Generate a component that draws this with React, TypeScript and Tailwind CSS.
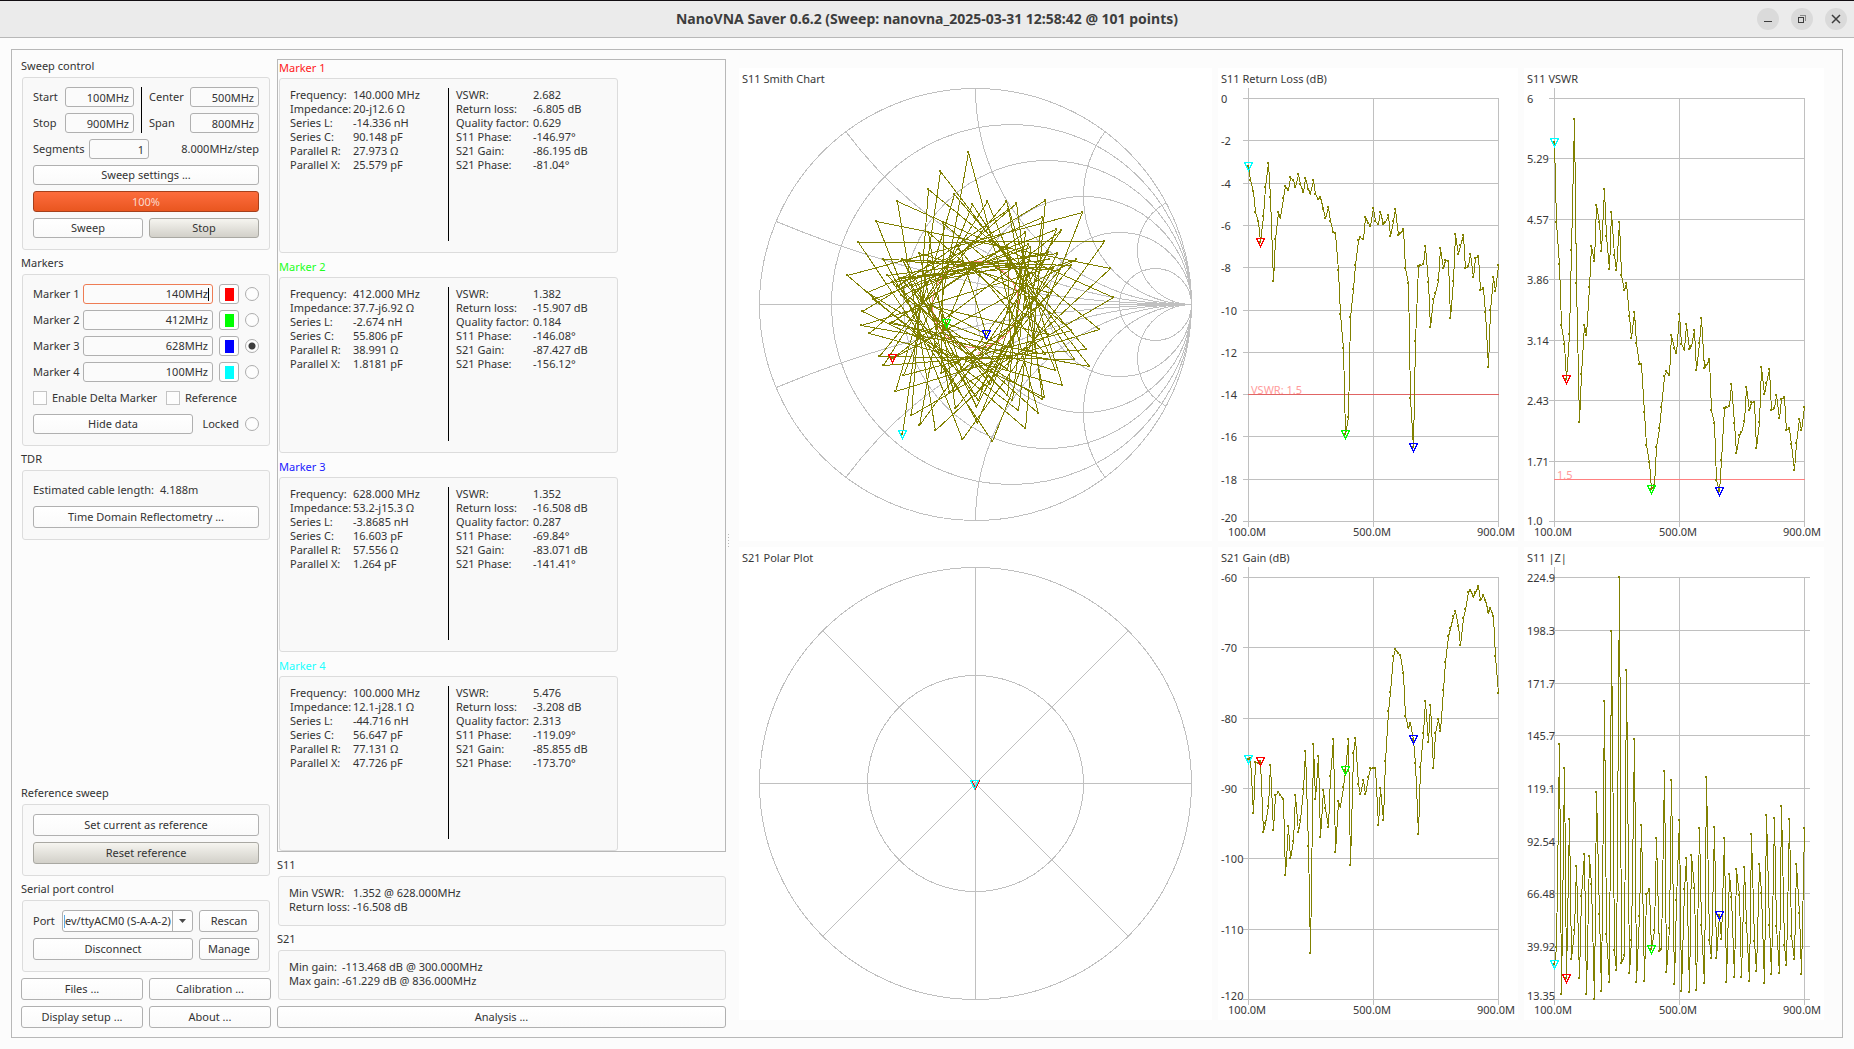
import { useId } from 'react'
import type { ReactNode } from 'react'

const returnLoss = [
  3.208, 3.9, 4.4, 5.4, 5.83, 6.805, 5.6, 4.21, 3.05, 4.67, 8.66, 6.65, 5.41, 5.62, 4.73, 4.16, 4.36, 3.72, 3.89, 4.22,
  3.58, 4.05, 4.46, 3.79, 4.28, 4.48, 3.9, 4.54, 4.77, 4.66, 5.23, 5.69, 5.15, 5.8, 6.34, 6.36, 8.14, 10.2, 11.8, 15.907,
  15.1, 10.35, 9.03, 7.9, 6.72, 6.57, 6.69, 5.63, 5.92, 6.06, 5.18, 5.83, 5.95, 5.38, 5.95, 5.88, 5.51, 6.53, 5.8, 5.26,
  6.46, 6.37, 6.21, 8.05, 8.73, 14.2, 16.508, 11.5, 7.95, 7.9, 7.85, 6.98, 8.7, 10.83, 9.48, 9.23, 8.61, 7.08, 8.02, 7.68,
  7.7, 10.4, 8.66, 6.43, 7.37, 6.94, 6.49, 8.03, 7.95, 7.39, 8.45, 7.57, 7.46, 9.1, 9.0, 10.1, 12.74, 10.0, 8.48, 9.12,
  7.9,
]

const impedance = [
  30.7, 39.5, 141.3, 15.7, 129.2, 24, 103.8, 33.6, 48, 79.9, 23.7, 64.8, 86.2, 15.7, 85.2, 71, 13.5, 117.3, 56, 17.2,
  162.7, 46, 22, 198, 38, 27.7, 225, 31.2, 35.6, 178.4, 26.2, 43, 143.8, 22, 54.8, 100.7, 22.5, 66, 68.5, 38.3,
  48.1, 94.2, 37.6, 38.6, 127.8, 27, 49, 123.3, 20.7, 63, 103.2, 17.5, 68.5, 84.2, 16.7, 85.7, 69, 18, 99.2, 50.6,
  21.2, 124.8, 43, 33.7, 99.7, 33.7, 55.35, 43.4, 94.2, 22, 76, 64.3, 24.5, 78.7, 65.6, 24.5, 79.7, 51.3, 22.5, 96.2,
  42.3, 27.6, 81.2, 66.5, 21.5, 105.8, 50.3, 25.7, 104.3, 50, 26.5, 110.3, 40.6, 30.2, 103.8, 44.8, 33.2, 81.2, 56.5, 25.7,
  98.9,
]

const gain = [
  -85.855, -85.8, -93.5, -86.3, -86.5, -86.195, -96.2, -95, -92.5, -86.8, -96, -91, -90.6, -91, -91.5, -102.4, -95.4, -99.9, -97.6, -91,
  -96.3, -94.6, -90.2, -84.8, -98.3, -113.468, -83.7, -91.6, -85.5, -97, -90.3, -92.8, -95.5, -88.3, -83.1, -99.1, -91.8, -92.6, -89.9, -87.427,
  -83.1, -101, -85, -82.9, -89.4, -90.8, -88.8, -90.9, -88.4, -87.2, -87.2, -87.1, -95.2, -90, -94.6, -86.2, -79.1, -76.3, -71.3, -70.3,
  -70.8, -71.1, -73.6, -79.7, -81.3, -80.7, -83.071, -86.4, -96.6, -87, -82.2, -77.7, -83.5, -78.2, -87.1, -82.2, -80.2, -81.9, -76.1, -72.1,
  -68.4, -67.3, -65.6, -64.9, -66.9, -69.7, -65.9, -64.5, -62.2, -61.9, -62.7, -62.2, -61.229, -63.3, -62.6, -63.2, -65, -64.4, -65.5, -71.2,
  -76.5,
]

const magnitude = returnLoss.map((rl) => Math.pow(10, -rl / 20))
const vswr = magnitude.map((m) => (1 + m) / (1 - m))

// phases measured at the marker positions, in degrees
const knownPhase: Record<number, number> = { 0: -119.09, 5: -146.97, 39: -146.08, 66: -69.84 }

const wrap = (deg: number) => ((((deg + 180) % 360) + 360) % 360) - 180

// |Z| and |S11| give the phase up to its sign, the sign follows from the cable delay per step
const phase: number[] = []
magnitude.forEach((m, i) => {
  if (knownPhase[i] !== undefined) {
    phase.push(knownPhase[i])
    return
  }
  const k = (impedance[i] / 50) ** 2
  const cos = ((1 + m * m) * (k - 1)) / (2 * m * (k + 1))
  const angle = (Math.acos(Math.max(-1, Math.min(1, cos))) * 180) / Math.PI
  const expected = phase[i - 1] - (i < 10 ? 150 : 126)
  phase.push(Math.abs(wrap(angle - expected)) < Math.abs(wrap(-angle - expected)) ? angle : -angle)
})

interface Marker {
  name: string
  color: string
  textClass: string
  swatchClass: string
  index: number
  value: string
  left: [string, string][]
  right: [string, string][]
}

const buildMarker = (
  name: string,
  color: string,
  textClass: string,
  swatchClass: string,
  index: number,
  value: string,
  l: string[],
  r: string[],
): Marker => ({
  name,
  color,
  textClass,
  swatchClass,
  index,
  value,
  left: ['Frequency:', 'Impedance:', 'Series L:', 'Series C:', 'Parallel R:', 'Parallel X:'].map((k, i) => [k, l[i]]),
  right: ['VSWR:', 'Return loss:', 'Quality factor:', 'S11 Phase:', 'S21 Gain:', 'S21 Phase:'].map((k, i) => [k, r[i]]),
})

const markers: Marker[] = [
  buildMarker('Marker 1', '#ff0000', 'text-[#ff2020]', 'bg-[#ff0000]', 5, '140MHz',
    ['140.000 MHz', '20-j12.6 Ω', '-14.336 nH', '90.148 pF', '27.973 Ω', '25.579 pF'],
    ['2.682', '-6.805 dB', '0.629', '-146.97°', '-86.195 dB', '-81.04°']),
  buildMarker('Marker 2', '#00ff00', 'text-[#20ff20]', 'bg-[#00ff00]', 39, '412MHz',
    ['412.000 MHz', '37.7-j6.92 Ω', '-2.674 nH', '55.806 pF', '38.991 Ω', '1.8181 pF'],
    ['1.382', '-15.907 dB', '0.184', '-146.08°', '-87.427 dB', '-156.12°']),
  buildMarker('Marker 3', '#0000ff', 'text-[#2020ff]', 'bg-[#0000ff]', 66, '628MHz',
    ['628.000 MHz', '53.2-j15.3 Ω', '-3.8685 nH', '16.603 pF', '57.556 Ω', '1.264 pF'],
    ['1.352', '-16.508 dB', '0.287', '-69.84°', '-83.071 dB', '-141.41°']),
  buildMarker('Marker 4', '#00ffff', 'text-[#20ffff]', 'bg-[#00ffff]', 0, '100MHz',
    ['100.000 MHz', '12.1-j28.1 Ω', '-44.716 nH', '56.647 pF', '77.131 Ω', '47.726 pF'],
    ['5.476', '-3.208 dB', '2.313', '-119.09°', '-85.855 dB', '-173.70°']),
]

const Panel = ({ className = '', children }: { className?: string; children: ReactNode }) => (
  <div className={`rounded-[3px] border border-[#dcdcdc] bg-[#f9f9f9] ${className}`}>{children}</div>
)

const Title = ({ children }: { children: ReactNode }) => <h2 className="flex h-6 items-center pt-0.5">{children}</h2>

const Button = ({ children, className = 'h-[22px]' }: { children: ReactNode; className?: string }) => (
  <button
    type="button"
    className={`rounded-[3px] border border-[#b0b0b0] bg-linear-to-b from-white to-[#fafafa] text-center ${className}`}
  >
    {children}
  </button>
)

const DullButton = ({ children, className = 'h-[22px]' }: { children: ReactNode; className?: string }) => (
  <button
    type="button"
    className={`rounded-[3px] border border-[#a9a8a2] bg-linear-to-b from-[#f6f5f0] to-[#d2d0c9] text-center ${className}`}
  >
    {children}
  </button>
)

const Field = ({ label, value, labelClass, inputClass }: { label: string; value: string; labelClass: string; inputClass: string }) => {
  const id = useId()
  return (
    <div className="flex h-5 items-center">
      <label htmlFor={id} className={labelClass}>
        {label}
      </label>
      <input
        id={id}
        defaultValue={value}
        className={`h-5 rounded-[3px] border border-[#b0b0b0] bg-[#fbfbfb] px-1 text-right ${inputClass}`}
      />
    </div>
  )
}

const Radio = ({ label, checked = false }: { label: string; checked?: boolean }) => (
  <input
    type="radio"
    name="active-marker"
    aria-label={label}
    defaultChecked={checked}
    className="size-[14px] appearance-none rounded-full border border-[#adadad] bg-[#fdfdfd] checked:bg-[radial-gradient(circle,#3c3c3c_3px,#fdfdfd_4px)]"
  />
)

const Check = ({ label, className = '' }: { label: string; className?: string }) => (
  <label className={`flex items-center gap-[5px] whitespace-nowrap ${className}`}>
    <input type="checkbox" className="size-[14px] appearance-none border border-[#c4c4c4] bg-[#fdfdfd]" />
    {label}
  </label>
)

const SweepControl = () => (
  <section>
    <Title>Sweep control</Title>
    <Panel className="mx-px flex flex-col gap-1.5 px-2.5 pt-[9px] pb-[11px]">
      <div className="flex justify-between">
        <div className="flex flex-col gap-1.5">
          <Field label="Start" value="100MHz" labelClass="w-8" inputClass="w-[69px]" />
          <Field label="Stop" value="900MHz" labelClass="w-8" inputClass="w-[69px]" />
        </div>
        <div className="w-px bg-black" />
        <div className="flex flex-col gap-1.5">
          <Field label="Center" value="500MHz" labelClass="w-[41px]" inputClass="w-[69px]" />
          <Field label="Span" value="800MHz" labelClass="w-[41px]" inputClass="w-[69px]" />
        </div>
      </div>
      <div className="flex items-center justify-between">
        <Field label="Segments" value="1" labelClass="w-14" inputClass="w-[60px]" />
        <span>8.000MHz/step</span>
      </div>
      <Button className="h-5">Sweep settings ...</Button>
      <div
        role="progressbar"
        aria-valuenow={100}
        className="flex h-[21px] items-center justify-center rounded-[3px] border border-[#a5401c] bg-linear-to-b from-[#fd6c3c] to-[#e9561f] text-[#fbd9cc]"
      >
        100%
      </div>
      <div className="grid grid-cols-2 gap-1.5">
        <Button className="h-5">Sweep</Button>
        <DullButton className="h-5">Stop</DullButton>
      </div>
    </Panel>
  </section>
)

const MarkerRow = ({ marker, focused, active }: { marker: Marker; focused: boolean; active: boolean }) => {
  const id = useId()
  return (
    <div className="flex h-5 items-center gap-1.5">
      <label htmlFor={id} className="w-11 whitespace-nowrap">
        {marker.name}
      </label>
      <div
        className={`flex h-5 flex-1 items-center rounded-[3px] border bg-[#fbfbfb] ${focused ? 'border-[#ee7c54] pr-[3px]' : 'border-[#b0b0b0] pr-1'}`}
      >
        <input id={id} defaultValue={marker.value} className="w-full min-w-0 flex-1 bg-transparent text-right outline-none" />
        {focused && <span className="h-[13px] w-px bg-black" />}
      </div>
      <button
        type="button"
        aria-label={`${marker.name} color`}
        className="flex size-5 items-center justify-center rounded-[3px] border border-[#b0b0b0] bg-white"
      >
        <span className={`h-[13px] w-[9px] ${marker.swatchClass}`} />
      </button>
      <Radio label={marker.name} checked={active} />
    </div>
  )
}

const MarkersPanel = () => (
  <section>
    <Title>Markers</Title>
    <Panel className="mx-px flex flex-col gap-1.5 px-2.5 pt-[9px] pb-[11px]">
      {markers.map((m, i) => (
        <MarkerRow key={m.name} marker={m} focused={i === 0} active={i === 2} />
      ))}
      <div className="flex h-5 items-center">
        <Check label="Enable Delta Marker" className="w-[133px]" />
        <Check label="Reference" />
      </div>
      <div className="flex items-center justify-between">
        <Button className="h-5 w-40">Hide data</Button>
        <label className="flex items-center gap-1.5">
          Locked <Radio label="Locked" />
        </label>
      </div>
    </Panel>
  </section>
)

const Sidebar = () => (
  <aside className="flex w-[250px] shrink-0 flex-col">
    <SweepControl />
    <MarkersPanel />
    <section>
      <Title>TDR</Title>
      <Panel className="mx-px flex flex-col gap-1.5 px-2.5 pt-[9px] pb-[11px]">
        <p className="flex h-5 items-center gap-1.5">
          <span>Estimated cable length:</span>
          <span>4.188m</span>
        </p>
        <Button>Time Domain Reflectometry ...</Button>
      </Panel>
    </section>
    <section className="mt-auto">
      <Title>Reference sweep</Title>
      <Panel className="mx-px flex flex-col gap-1.5 px-2.5 pt-[9px] pb-[11px]">
        <Button>Set current as reference</Button>
        <DullButton>Reset reference</DullButton>
      </Panel>
    </section>
    <section>
      <Title>Serial port control</Title>
      <Panel className="mx-px flex flex-col gap-1.5 px-2.5 pt-[9px] pb-[11px]">
        <div className="flex items-center gap-1.5">
          <label htmlFor="port" className="w-[23px]">
            Port
          </label>
          <div className="flex h-[22px] min-w-0 flex-1 items-center rounded-[3px] border border-[#b0b0b0] bg-[#fdfdfd] pl-px">
            <span className="h-[13px] w-px bg-[#5aa9e6]" />
            <select id="port" className="h-full min-w-0 flex-1 appearance-none overflow-hidden whitespace-nowrap">
              <option>ev/ttyACM0 (S-A-A-2)</option>
            </select>
            <span className="flex h-full w-5 items-center justify-center border-l border-[#b0b0b0]">
              <svg width="7" height="4" viewBox="0 0 7 4" fill="#4a4a4a">
                <path d="M0 0h7L3.5 4z" />
              </svg>
            </span>
          </div>
          <Button className="h-[22px] w-[60px]">Rescan</Button>
        </div>
        <div className="flex gap-1.5">
          <Button className="h-[22px] flex-1">Disconnect</Button>
          <Button className="h-[22px] w-[60px]">Manage</Button>
        </div>
      </Panel>
    </section>
    <div className="mt-1.5 grid grid-cols-2 gap-1.5">
      <Button>Files ...</Button>
      <Button>Calibration ...</Button>
      <Button>Display setup ...</Button>
      <Button>About ...</Button>
    </div>
  </aside>
)

const Pairs = ({ rows, labelClass }: { rows: [string, string][]; labelClass: string }) => (
  <dl>
    {rows.map(([k, v]) => (
      <div key={k} className="flex h-3.5 items-center whitespace-nowrap">
        <dt className={labelClass}>{k}</dt>
        <dd>{v}</dd>
      </div>
    ))}
  </dl>
)

const DataColumn = () => (
  <div className="flex w-[449px] shrink-0 flex-col pt-1.5">
    <div className="flex flex-1 flex-col gap-1.5 border border-[#b8b8b8] pl-px">
      {markers.map((m) => (
        <section key={m.name} className="flex flex-1 flex-col">
          <h3 className={`flex h-[18px] items-center pb-0.5 ${m.textClass}`}>{m.name}</h3>
          <Panel className="flex w-[339px] flex-1 px-2.5 pt-[9px] pb-[11px]">
            <div className="w-[158px]">
              <Pairs rows={m.left} labelClass="w-[63px]" />
            </div>
            <div className="mr-[7px] w-px bg-black" />
            <Pairs rows={m.right} labelClass="w-[77px]" />
          </Panel>
        </section>
      ))}
    </div>
    <Title>S11</Title>
    <Panel className="ml-px h-[50px] px-2.5 pt-[9px]">
      <Pairs rows={[['Min VSWR:', '1.352 @ 628.000MHz'], ['Return loss:', '-16.508 dB']]} labelClass="w-16" />
    </Panel>
    <Title>S21</Title>
    <Panel className="ml-px h-[50px] px-2.5 pt-[9px]">
      <Pairs rows={[['Min gain:', '-113.468 dB @ 300.000MHz'], ['Max gain:', '-61.229 dB @ 836.000MHz']]} labelClass="w-[53px]" />
    </Panel>
    <Button className="mt-1.5 h-[22px]">Analysis ...</Button>
  </div>
)

const Trace = ({ points }: { points: [number, number][] }) => (
  <g shapeRendering="crispEdges">
    <polyline points={points.map((p) => p.join(',')).join(' ')} fill="none" stroke="#808000" />
    {points.map(([x, y], i) => (
      <rect key={i} x={x - 1.5} y={y - 1.5} width="2" height="2" fill="#808000" />
    ))}
  </g>
)

const MarkerShapes = ({ place }: { place: (index: number) => [number, number] }) => (
  <g shapeRendering="crispEdges" fill="none">
    {markers.map((m) => {
      const [x, y] = place(m.index)
      return <path key={m.name} d={`M${x - 4} ${y - 4}h8l-4 8z`} stroke={m.color} />
    })}
  </g>
)

interface CartesianProps {
  title: string
  data: number[]
  min: number
  max: number
  labels: string[]
  bottom: number
  lastLabelShift?: number
  limit?: { value: number; text: string; color: string }
  wide?: boolean
}

const CartesianChart = ({ title, data, min, max, labels, bottom, lastLabelShift = 0, limit, wide = false }: CartesianProps) => {
  const top = 30.5
  const toY = (value: number) => Math.floor(top + ((max - value) / (max - min)) * (bottom - top)) + 0.5
  const place = (i: number): [number, number] => [Math.floor(30 + i * 2.5) + 0.5, toY(data[i])]
  const limitY = limit ? toY(limit.value) : 0
  return (
    <svg viewBox="0 0 300 473" className="size-full bg-white" fill="#383838" fontSize="11" role="img" aria-label={title}>
      <g stroke="#c0c0c0" shapeRendering="crispEdges">
        {labels.map((l) => (
          <line key={l} x1="25" x2={wide ? 286 : 281} y1={toY(Number(l))} y2={toY(Number(l))} />
        ))}
        <line x1="30.5" x2="30.5" y1="20" y2={bottom + 5} />
        <line x1="155.5" x2="155.5" y1="30" y2={bottom + 5} />
        <line x1="280.5" x2="280.5" y1="30" y2={bottom + 5} />
        {limit && <line x1="30" x2="281" y1={limitY} y2={limitY} stroke={limit.color} />}
      </g>
      <text x="3" y="15">
        {title}
      </text>
      {labels.map((l, i) => (
        <text key={l} x="3" y={toY(Number(l)) + (i === labels.length - 1 ? lastLabelShift : 4)}>
          {l}
        </text>
      ))}
      <text x="10" y={bottom + 14}>100.0M</text>
      <text x="135" y={bottom + 14}>500.0M</text>
      <text x="259" y={bottom + 14}>900.0M</text>
      {limit && (
        <text x="33" y={limitY - 1} fill="#ff9c9c">
          {limit.text}
        </text>
      )}
      <Trace points={data.map((_, i) => place(i))} />
      <MarkerShapes place={place} />
    </svg>
  )
}

const CENTER = 236.5
const RADIUS = 216

const gammaPoint = (i: number): [number, number] => {
  const rad = (phase[i] * Math.PI) / 180
  return [
    Math.floor(CENTER + RADIUS * magnitude[i] * Math.cos(rad)) + 0.5,
    Math.floor(CENTER - RADIUS * magnitude[i] * Math.sin(rad)) + 0.5,
  ]
}

const SmithChart = () => (
  <svg viewBox="0 0 473 473" className="size-full bg-white" fontSize="11" role="img" aria-label="S11 Smith Chart">
    <text x="3" y="15" fill="#383838">
      S11 Smith Chart
    </text>
    <g fill="none" stroke="#c0c0c0" shapeRendering="crispEdges">
      <line x1={CENTER - RADIUS} x2={CENTER + RADIUS} y1={CENTER} y2={CENTER} />
      {[0, 0.2, 0.5, 1, 2, 5].map((r) => (
        <circle key={r} cx={CENTER + (RADIUS * r) / (1 + r)} cy={CENTER} r={RADIUS / (1 + r)} />
      ))}
      {[0.2, 0.5, 1, 2, 4].map((x) => {
        const d = 1 + x * x
        const gx = CENTER + (RADIUS * (x * x - 1)) / d
        const gy = (RADIUS * 2 * x) / d
        const end = CENTER + RADIUS
        return (
          <g key={x}>
            <path d={`M${gx} ${CENTER - gy}A${RADIUS / x} ${RADIUS / x} 0 0 0 ${end} ${CENTER}`} />
            <path d={`M${gx} ${CENTER + gy}A${RADIUS / x} ${RADIUS / x} 0 0 1 ${end} ${CENTER}`} />
          </g>
        )
      })}
      <circle cx={CENTER} cy={CENTER} r={RADIUS / 5} stroke="#ff8080" />
    </g>
    <text x={CENTER} y={CENTER + 55} textAnchor="middle" fill="#ff9c9c">
      1.5
    </text>
    <Trace points={magnitude.map((_, i) => gammaPoint(i))} />
    <MarkerShapes place={gammaPoint} />
  </svg>
)

const PolarChart = () => {
  const d = RADIUS * Math.SQRT1_2
  return (
    <svg viewBox="0 0 473 473" className="size-full bg-white" fontSize="11" role="img" aria-label="S21 Polar Plot">
      <text x="3" y="15" fill="#383838">
        S21 Polar Plot
      </text>
      <g fill="none" stroke="#c0c0c0" shapeRendering="crispEdges">
        <circle cx={CENTER} cy={CENTER} r={RADIUS} />
        <circle cx={CENTER} cy={CENTER} r={RADIUS / 2} />
        <line x1={CENTER - RADIUS} x2={CENTER + RADIUS} y1={CENTER} y2={CENTER} />
        <line x1={CENTER} x2={CENTER} y1={CENTER - RADIUS} y2={CENTER + RADIUS} />
        <line x1={CENTER - d} x2={CENTER + d} y1={CENTER - d} y2={CENTER + d} />
        <line x1={CENTER - d} x2={CENTER + d} y1={CENTER + d} y2={CENTER - d} />
      </g>
      <MarkerShapes place={(i) => [i === 5 ? CENTER : CENTER - 1, CENTER + 1]} />
    </svg>
  )
}

const Charts = () => (
  <div className="grid min-w-0 flex-1 grid-cols-[473fr_300fr_300fr] grid-rows-2 gap-1.5 pt-[15px] pr-[9px] pb-[8px]">
    <SmithChart />
    <CartesianChart
      title="S11 Return Loss (dB)"
      data={returnLoss.map((v) => -v)}
      min={-20}
      max={0}
      bottom={453.5}
      labels={['0', '-2', '-4', '-6', '-8', '-10', '-12', '-14', '-16', '-18', '-20']}
      limit={{ value: -13.98, text: 'VSWR: 1.5', color: '#e06464' }}
    />
    <CartesianChart
      title="S11 VSWR"
      data={vswr}
      min={1}
      max={6}
      bottom={453.5}
      labels={['6', '5.29', '4.57', '3.86', '3.14', '2.43', '1.71', '1.0']}
      lastLabelShift={3}
      limit={{ value: 1.5, text: '1.5', color: '#ff8080' }}
    />
    <PolarChart />
    <CartesianChart
      title="S21 Gain (dB)"
      data={gain}
      min={-120}
      max={-60}
      bottom={452.5}
      labels={['-60', '-70', '-80', '-90', '-100', '-110', '-120']}
    />
    <CartesianChart
      title="S11 |Z|"
      data={impedance}
      min={13.35}
      max={224.9}
      bottom={452.5}
      labels={['224.9', '198.3', '171.7', '145.7', '119.1', '92.54', '66.48', '39.92', '13.35']}
      wide
    />
  </div>
)

const TitleBar = () => (
  <header className="grid h-[38px] grid-cols-[1fr_auto_1fr] items-center border-t border-b border-t-[#120d12] border-b-[#b8b8b8] bg-[#ebebeb]">
    <span />
    <h1 className="text-sm font-bold text-[#3d3d3d]">
      NanoVNA Saver 0.6.2 (Sweep: nanovna_2025-03-31 12:58:42 @ 101 points)
    </h1>
    <div className="flex justify-end gap-3 pr-[7px]">
      <button type="button" aria-label="Minimize" className="flex size-[22px] items-center justify-center rounded-full bg-[#dadada]">
        <svg width="10" height="10" stroke="#3d3d3d" shapeRendering="crispEdges">
          <path d="M1 7.5h8" />
        </svg>
      </button>
      <button type="button" aria-label="Restore" className="flex size-[22px] items-center justify-center rounded-full bg-[#dadada]">
        <svg width="10" height="10" fill="none" stroke="#3d3d3d" shapeRendering="crispEdges">
          <path d="M1.5 3.5h5v5h-5z" />
          <path d="M3 1.5h5.5v5.5" stroke="#8a8a8a" />
        </svg>
      </button>
      <button type="button" aria-label="Close" className="flex size-[22px] items-center justify-center rounded-full bg-[#dadada]">
        <svg width="10" height="10" stroke="#3d3d3d" strokeWidth="1.5">
          <path d="M1 1l8 8M9 1l-8 8" />
        </svg>
      </button>
    </div>
  </header>
)

export default function App() {
  return (
    <div className="flex min-h-screen flex-col bg-[#fcfcfc] font-['Noto_Sans',sans-serif] text-[11px] leading-[14px] text-[#333333]">
      <TitleBar />
      <main className="m-[11px] flex flex-1 border border-[#b8b8b8] px-[9px] pt-[3px] pb-[9px]">
        <Sidebar />
        <div className="ml-1.5 flex">
          <DataColumn />
        </div>
        <div className="flex w-[13px] shrink-0 flex-col justify-center gap-0.5 pl-0.5">
          {[0, 1, 2, 3, 4].map((i) => (
            <span key={i} className="size-px bg-[#b8b8b8]" />
          ))}
        </div>
        <Charts />
      </main>
    </div>
  )
}
